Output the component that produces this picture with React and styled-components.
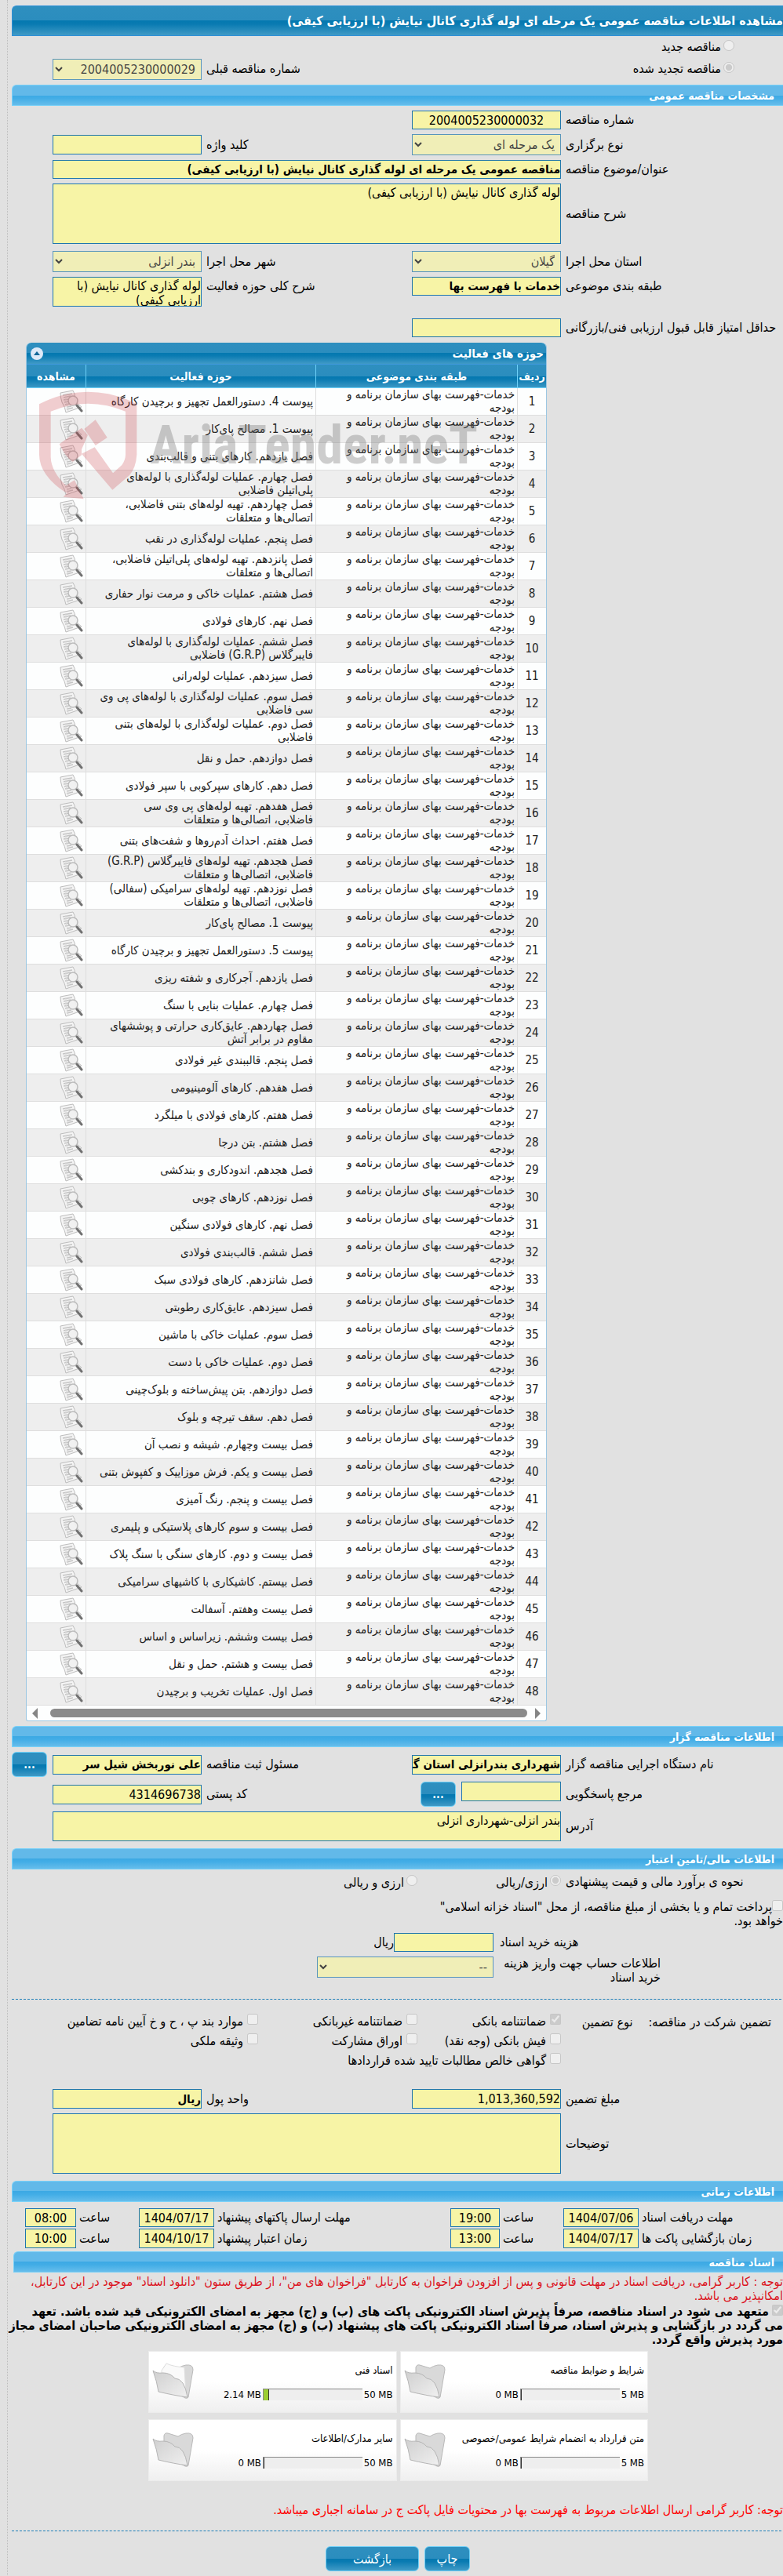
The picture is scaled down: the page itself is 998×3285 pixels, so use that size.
import React, { useId } from 'react';
import styled, { createGlobalStyle, css } from 'styled-components';

const Global = createGlobalStyle`
  *, *::before, *::after { box-sizing: border-box; }
  body {
    margin: 0;
    background: #e1e1e1;
    color: #000;
    overflow-x: hidden;
    font: 16px/18px "DejaVu Sans Condensed", "DejaVu Sans", sans-serif;
  }
`;

const blueGloss = css`
  background: linear-gradient(#2e8fbf 0, #2b8dbe 50%, #0478b0 50%, #0a7bb2 62%, #409ac6 100%);
`;

const Page = styled.main`
  margin-left: 9px;
  padding: 7px 0 5px 5px;
  border-left: 1px dotted #bdbdbd;
  direction: rtl;
`;

const Title = styled.h1`
  ${blueGloss}
  margin: 0;
  height: 39px;
  border: 1px solid #2f90d8;
  border-right: 0;
  border-radius: 6px 0 0 0;
  color: #fff;
  font-size: 16px;
  line-height: 38px;
  white-space: nowrap;
`;

const SectionBar = styled.h2`
  margin: ${p => p.$top ?? 6}px 0 0 ${p => p.$inset ?? 0}px;
  height: 27px;
  padding-right: 11px;
  background: linear-gradient(#62b9e9 0, #62b9e9 50%, #3ca9e4 50%, #42ade6 65%, #66bdeb 100%);
  border: 1px solid #78d0f8;
  border-right: 0;
  border-radius: 6px 0 0 0;
  color: #fff;
  font-size: 14px;
  line-height: 26px;
`;

const Row = styled.div`
  display: grid;
  grid-template-columns: 283fr 190fr 268fr 190fr 52fr;
  align-items: ${p => p.$align || 'center'};
  margin-top: ${p => p.$top ?? 6}px;
`;

const Caption = styled.label`
  padding-left: ${p => p.$gap ?? 6}px;
  text-align: left;
  line-height: 24px;
  white-space: nowrap;
`;

const box = css`
  display: block;
  width: 100%;
  margin: 0;
  padding: 0;
  background: #f7f4a6;
  border: 1px solid #1f76ad;
  border-radius: 0;
  color: #000;
  outline: 0;
`;

const Input = styled.input`
  ${box}
  height: ${p => p.$tall ? 25 : 24}px;
  font: ${p => p.$bold ? 'bold 15px' : '16px'} "DejaVu Sans Condensed", "DejaVu Sans", sans-serif;
  text-align: ${p => p.$center ? 'center' : 'right'};
`;

const TextArea = styled.textarea`
  ${box}
  height: ${p => p.$height}px;
  font: inherit;
  line-height: 18px;
  padding-top: 2px;
  resize: none;
  overflow: hidden;
`;

const Select = styled.select`
  ${box}
  height: 27px;
  padding: 0 3px;
  font: 16px "DejaVu Sans Condensed", "DejaVu Sans", sans-serif;
  opacity: .7;
`;

const Wide = styled.div`
  grid-column: 2 / span 3;
`;

const ModeRow = styled.div`
  display: grid;
  grid-template-columns: 741fr 190fr 52fr;
  align-items: center;
  height: 28px;
`;

const ModeCell = styled.div`
  display: flex;
  justify-content: space-between;
  padding-right: 62px;
`;

const Choice = styled.label`
  display: flex;
  align-items: center;
  white-space: nowrap;
  gap: ${p => p.$gap ?? 3}px;
`;

const Tick = styled.input`
  width: 14px;
  height: 14px;
  margin: 0 0 5px;
  flex: none;
`;

const Button = styled.button`
  ${blueGloss}
  height: 32px;
  width: ${p => p.$width}px;
  padding: 0;
  border: 1px solid #6dd0f8;
  border-radius: 6px;
  color: #fff;
  font: ${p => p.$bold ? 'bold 14px' : '16px'} "DejaVu Sans Condensed", "DejaVu Sans", sans-serif;
  cursor: pointer;
`;

const ButtonCell = styled.div`
  display: flex;
  justify-content: flex-end;
`;

const AskCell = styled.div`
  display: flex;
  justify-content: space-between;
  align-items: flex-start;
  gap: 7px;
  padding-left: 11px;
`;

/* Activity list */

const Panel = styled.section`
  position: relative;
  margin: 7px 301px 0 18px;
  border: 1px solid #9cc7e2;
  border-top: 0;
  border-radius: 6px 6px 3px 3px;
  background: #fdfefe;
`;

const PanelHead = styled.header`
  ${blueGloss}
  display: flex;
  justify-content: space-between;
  align-items: center;
  height: 28px;
  padding: 0 3px 0 5px;
  border-radius: 6px 6px 0 0;
  border-bottom: 1px solid #3f98da;
  color: #fff;
  font-size: 15px;
  font-weight: bold;
`;

const Toggle = styled.button`
  width: 16px;
  height: 16px;
  padding: 0;
  border: 0;
  border-radius: 8px;
  background: #dde9f8;
  display: grid;
  place-items: center;
`;

const Grid = styled.table`
  width: 100%;
  table-layout: fixed;
  border-collapse: separate;
  border-spacing: 0;
`;

const Th = styled.th`
  width: ${p => p.$width || 'auto'};
  height: 30px;
  padding: 0;
  border-bottom: 1px solid #6dd0f8;
  border-left: ${p => p.$last ? '0' : '1px solid #6dd0f8'};
  color: #fff;
  font-size: 14px;
`;

const HeadRow = styled.tr`
  ${blueGloss}
`;

const BodyRow = styled.tr`
  background: ${p => p.$odd ? '#eee' : '#fdfefe'};
`;

const Td = styled.td`
  height: 35px;
  padding: 0 3px;
  border-bottom: 1px solid #dedede;
  border-left: ${p => p.$last ? '0' : '1px solid #dedede'};
  color: #222;
  font-size: 15px;
  line-height: 17px;
  text-align: ${p => p.$center ? 'center' : 'right'};
  white-space: nowrap;
`;

const ViewLink = styled.a`
  display: block;
  width: 30px;
  height: 30px;
`;

const ScrollTrack = styled.div`
  display: flex;
  align-items: center;
  justify-content: space-between;
  gap: 10px;
  height: 19px;
  padding: 0 7px;
`;

const ScrollThumb = styled.div`
  flex: 1;
  height: 11px;
  margin-left: 6px;
  border-radius: 6px;
  background: #8b8b8b;
`;

const Watermark = styled.div`
  position: absolute;
  left: 16px;
  top: 61px;
  display: flex;
  align-items: flex-start;
  gap: 16px;
  direction: ltr;
  pointer-events: none;
`;

const WatermarkName = styled.span`
  color: rgba(120, 120, 120, .36);
  font: bold 68px/100px "Liberation Sans Narrow", "Roboto Condensed", "Liberation Sans", sans-serif;
  white-space: nowrap;
  padding-top: 20px;
`;

/* Financial part */

const MoneyRow = styled(Row)`
  grid-template-columns: 369fr 225fr 389fr;
`;

const CostCell = styled.div`
  display: grid;
  grid-template-columns: 127px auto;
  justify-content: start;
  align-items: center;
`;

const AccountCaption = styled.label`
  width: 213px;
  margin-right: auto;
  padding-left: 8px;
  line-height: 18px;
`;

const Treasury = styled.label`
  display: block;
  margin-top: 10px;
  line-height: 18px;
`;

const Divider = styled.hr`
  margin: ${p => p.$top}px 2px 0 0;
  border: 0;
  border-top: 1px dashed #1f7fb8;
`;

const Guarantee = styled.div`
  display: grid;
  grid-template-columns: 283fr 700fr;
  margin-top: ${p => p.$top}px;
`;

const GuaranteeLead = styled.div`
  display: flex;
  gap: 20px;
  padding-right: 15px;
  line-height: 28px;
  white-space: nowrap;
`;

const Options = styled.div`
  display: grid;
  grid-template-columns: minmax(0, 183fr) minmax(0, 203fr) minmax(0, 314fr);
  grid-auto-rows: 25px;
`;

const DateRow = styled.div`
  display: grid;
  grid-template-columns: 184fr 96fr 81fr 63fr 301fr 96fr 80fr 65fr 17fr;
  align-items: center;
  margin-top: ${p => p.$top}px;
`;

/* Documents */

const Notice = styled.p`
  margin: ${p => p.$top}px 0 0;
  color: ${p => p.$color};
  line-height: 18px;
  white-space: nowrap;
`;

const Pledge = styled.label`
  display: block;
  margin-top: 2px;
  font-weight: bold;
  line-height: 18px;
  white-space: nowrap;
`;

const InlineTick = styled.input`
  width: 14px;
  height: 14px;
  margin: 0 0 0 ${p => p.$gap ?? 0}px;
  vertical-align: 0;
`;

const Cards = styled.div`
  display: grid;
  grid-template-columns: 1fr 1fr;
  gap: 8px 4px;
  margin: 5px 172px 0 174px;
`;

const Card = styled.article`
  display: flex;
  justify-content: space-between;
  height: 79px;
  padding: 13px 4px 0 3px;
  background: linear-gradient(#fff 0, #fff 50%, #efefef 100%);
  border: 1px solid #ececec;
`;

const CardTitle = styled.h3`
  margin: 0 0 12px;
  font-size: 13px;
  font-weight: normal;
  line-height: 22px;
  white-space: nowrap;
`;

const Usage = styled.div`
  display: flex;
  align-items: center;
  gap: 2px;
  height: 15px;
  font-size: 13px;
`;

const Amount = styled.span`
  direction: ltr;
  white-space: nowrap;
`;

const Meter = styled.div`
  width: 127px;
  height: 15px;
  direction: ltr;
  background: #eee;
  border-top: 1px solid #8a8a8a;
  border-left: 1px solid #8a8a8a;
`;

const MeterFill = styled.div`
  height: 100%;
  background: #9acd32;
  border-right: 1px solid #333;
`;

const FolderBox = styled.div`
  width: 58px;
  flex: none;
  margin-top: 1px;
`;

const Actions = styled.div`
  display: flex;
  gap: 7px;
  margin: 19px 399px 0 0;
`;

function DocIcon() {
  return (
    <svg width="30" height="30" viewBox="0 0 30 30" aria-hidden="true">
      <path d="M1 4 L17 1 Q20 5 20 12 Q22 19 28 22 L8 29 Q7 22 3 16 Q1 10 1 4Z" fill="#f4f4f4" stroke="#bdbdbd" />
      <path d="M4 7l12-2M5 10l9-2M5 13l7-1M6 16l5-1M7 19l5-1M9 22l6-1M9 25l8-2" stroke="#c4c4c4" strokeWidth="1.5" />
      <path d="M8 5v9l3 13" stroke="#dadada" fill="none" />
      <circle cx="17" cy="14" r="6" fill="#f1f1f1" fillOpacity=".9" stroke="#bcbcbc" strokeWidth="1.5" />
      <path d="M22 20l6 7" stroke="#707070" strokeWidth="3" strokeLinecap="round" />
    </svg>
  );
}

function Folder({ full }) {
  const id = useId();
  return (
    <svg width="58" height="50" viewBox="0 0 58 50" aria-hidden="true">
      <defs>
        <linearGradient id={id} x1="0" y1="0" x2="1" y2="1">
          <stop offset="0" stopColor="#cfcfcf" />
          <stop offset="1" stopColor="#f0f0f0" />
        </linearGradient>
      </defs>
      <path d="M16 6 Q17 2 21 3 L34 7 Q38 4 44 3 Q53 2 53 9 L47 44 Q46 46 43 45 L16 30Z" fill="#d9d9d9" stroke="#b9b9b9" />
      {full && <path d="M13 10 L19 1 Q28 5 42 6 L44 40 L14 26Z" fill="#fafafa" stroke="#dedede" />}
      <path d="M2 10 Q6 14 15 13 Q24 13 30 20 Q42 20 46 44 Q30 42 9 37 Q7 24 2 10Z" fill={`url(#${id})`} stroke="#b5b5b5" />
    </svg>
  );
}

function Shield() {
  return (
    <svg width="125" height="139" viewBox="60 205 375 417" fill="#c8323c" fillOpacity=".24" aria-hidden="true">
      <path d="M60 257 Q150 210 246 210 Q345 210 433 257 V450 Q430 500 405 529 L340 585 L222 447 L272 422 L342 521 L376 490 Q390 470 390 450 V285 Q320 255 246 255 Q175 255 104 285 V460 Q106 515 162 568 L195 548 L230 620 L152 612 L165 598 Q60 530 60 450Z" />
      <path d="M137 410 L222 348 L246 375 L222 430 L222 452 L188 478 Q160 460 137 410Z" />
      <path d="M232 352 L275 317 L320 385 L275 415Z" />
    </svg>
  );
}

const ACTIVITIES = [
  'پیوست 4. دستورالعمل تجهیز و برچیدن کارگاه',
  'پیوست 1. مصالح پای‌کار',
  'فصل یازدهم. کارهای بتنی و قالب‌بندی',
  'فصل چهارم. عملیات لوله‌گذاری با لوله‌های|پلی‌اتیلن فاضلابی',
  'فصل چهاردهم. تهیه لوله‌های بتنی فاضلابی،|اتصالی‌ها و متعلقات',
  'فصل پنجم. عملیات لوله‌گذاری در نقب',
  'فصل پانزدهم. تهیه لوله‌های پلی‌اتیلن فاضلابی،|اتصالی‌ها و متعلقات',
  'فصل هشتم. عملیات خاکی و مرمت نوار حفاری',
  'فصل نهم. کارهای فولادی',
  'فصل ششم. عملیات لوله‌گذاری با لوله‌های|فایبرگلاس (G.R.P) فاضلابی',
  'فصل سیزدهم. عملیات لوله‌رانی',
  'فصل سوم. عملیات لوله‌گذاری با لوله‌های پی وی|سی فاضلابی',
  'فصل دوم. عملیات لوله‌گذاری با لوله‌های بتنی|فاضلابی',
  'فصل دوازدهم. حمل و نقل',
  'فصل دهم. کارهای سپرکوبی با سپر فولادی',
  'فصل هفدهم. تهیه لوله‌های پی وی سی|فاضلابی، اتصالی‌ها و متعلقات',
  'فصل هفتم. احداث آدم‌روها و شفت‌های بتنی',
  'فصل هجدهم. تهیه لوله‌های فایبرگلاس (G.R.P)|فاضلابی، اتصالی‌ها و متعلقات',
  'فصل نوزدهم. تهیه لوله‌های سرامیکی (سفالی)|فاضلابی، اتصالی‌ها و متعلقات',
  'پیوست 1. مصالح پای‌کار',
  'پیوست 5. دستورالعمل تجهیز و برچیدن کارگاه',
  'فصل یازدهم. آجرکاری و شفته ریزی',
  'فصل چهارم. عملیات بنایی با سنگ',
  'فصل چهاردهم. عایق‌کاری حرارتی و پوششهای|مقاوم در برابر آتش',
  'فصل پنجم. قالببندی غیر فولادی',
  'فصل هفدهم. کارهای آلومینیومی',
  'فصل هفتم. کارهای فولادی با میلگرد',
  'فصل هشتم. بتن درجا',
  'فصل هجدهم. اندودکاری و بندکشی',
  'فصل نوزدهم. کارهای چوبی',
  'فصل نهم. کارهای فولادی سنگین',
  'فصل ششم. قالب‌بندی فولادی',
  'فصل شانزدهم. کارهای فولادی سبک',
  'فصل سیزدهم. عایق‌کاری رطوبتی',
  'فصل سوم. عملیات خاکی با ماشین',
  'فصل دوم. عملیات خاکی با دست',
  'فصل دوازدهم. بتن پیش‌ساخته و بلوک‌چینی',
  'فصل دهم. سقف تیرچه و بلوک',
  'فصل بیست وچهارم. شیشه و نصب آن',
  'فصل بیست و یکم. فرش موزاییک و کفپوش بتنی',
  'فصل بیست و پنجم. رنگ آمیزی',
  'فصل بیست و سوم کارهای پلاستیکی و پلیمری',
  'فصل بیست و دوم. کارهای سنگی با سنگ پلاک',
  'فصل بیستم. کاشیکاری با کاشیهای سرامیکی',
  'فصل بیست وهفتم. آسفالت',
  'فصل بیست وششم. زیراساس و اساس',
  'فصل بیست و هشتم. حمل و نقل',
  'فصل اول. عملیات تخریب و برچیدن',
];

function Lines({ text }) {
  return text.split('|').map((line, i) => (
    <React.Fragment key={i}>{i > 0 && <br />}{line}</React.Fragment>
  ));
}

const GUARANTEES = [
  ['ضمانتنامه بانکی', true],
  ['ضمانتنامه غیربانکی'],
  ['موارد بند پ ، ح و خ آیین نامه تضامین'],
  ['فیش بانکی (وجه نقد)'],
  ['اوراق مشارکت'],
  ['وثیقه ملکی'],
  ['گواهی خالص مطالبات تایید شده قراردادها'],
];

const DATES = [
  ['مهلت دریافت اسناد', '1404/07/06', '19:00', 'مهلت ارسال پاکتهای پیشنهاد', '1404/07/17', '08:00'],
  ['زمان بازگشایی پاکت ها', '1404/07/17', '13:00', 'زمان اعتبار پیشنهاد', '1404/10/17', '10:00'],
];

const DOCUMENTS = [
  ['شرایط و ضوابط مناقصه', 5, 0],
  ['اسناد فنی', 50, 2.14],
  ['متن قرارداد به انضمام شرایط عمومی/خصوصی', 5, 0],
  ['سایر مدارک/اطلاعات', 50, 0],
];

function ActivityPanel() {
  return (
    <Panel>
      <PanelHead>
        <span>حوزه های فعالیت</span>
        <Toggle aria-label="بستن">
          <svg width="8" height="5" viewBox="0 0 8 5"><path d="M0 5L4 0l4 5z" fill="#14689a" /></svg>
        </Toggle>
      </PanelHead>
      <Grid>
        <thead>
          <HeadRow>
            <Th $width="37px">ردیف</Th>
            <Th $width="257px">طبقه بندی موضوعی</Th>
            <Th>حوزه فعالیت</Th>
            <Th $width="75px" $last>مشاهده</Th>
          </HeadRow>
        </thead>
        <tbody>
          {ACTIVITIES.map((text, i) => (
            <BodyRow key={i} $odd={i % 2 === 1}>
              <Td $center>{i + 1}</Td>
              <Td>خدمات-فهرست بهای سازمان برنامه و<br />بودجه</Td>
              <Td><Lines text={text} /></Td>
              <Td $last><ViewLink href="#" aria-label="مشاهده"><DocIcon /></ViewLink></Td>
            </BodyRow>
          ))}
        </tbody>
      </Grid>
      <ScrollTrack>
        <svg width="7" height="14" viewBox="0 0 7 14"><path d="M0 0l7 7L0 14z" fill="#858585" /></svg>
        <ScrollThumb />
        <svg width="7" height="14" viewBox="0 0 7 14"><path d="M7 0L0 7l7 7z" fill="#858585" /></svg>
      </ScrollTrack>
      <Watermark>
        <Shield />
        <WatermarkName>AriaTender.neT</WatermarkName>
      </Watermark>
    </Panel>
  );
}

export default function App() {
  return (
    <>
      <Global />
      <Page>
        <Title>مشاهده اطلاعات مناقصه عمومی یک مرحله ای لوله گذاری کانال نیایش (با ارزیابی کیفی)</Title>
        <ModeRow>
          <ModeCell>
            <Choice><Tick type="radio" name="mode" disabled />مناقصه جدید</Choice>
          </ModeCell>
        </ModeRow>
        <ModeRow>
          <ModeCell>
            <Choice><Tick type="radio" name="mode" disabled defaultChecked />مناقصه تجدید شده</Choice>
            <Caption htmlFor="prev">شماره مناقصه قبلی</Caption>
          </ModeCell>
          <Select id="prev" disabled><option>2004005230000029</option></Select>
        </ModeRow>

        <SectionBar>مشخصات مناقصه عمومی</SectionBar>
        <Row>
          <Caption htmlFor="number">شماره مناقصه</Caption>
          <Input id="number" $center readOnly value="2004005230000032" />
        </Row>
        <Row>
          <Caption htmlFor="kind">نوع برگزاری</Caption>
          <Select id="kind" disabled><option>یک مرحله ای</option></Select>
          <Caption htmlFor="keyword">کلید واژه</Caption>
          <Input id="keyword" $tall readOnly value="" />
        </Row>
        <Row>
          <Caption htmlFor="subject">عنوان/موضوع مناقصه</Caption>
          <Wide><Input id="subject" $bold readOnly value="مناقصه عمومی یک مرحله ای لوله گذاری کانال نیایش (با ارزیابی کیفی)" /></Wide>
        </Row>
        <Row>
          <Caption htmlFor="desc">شرح مناقصه</Caption>
          <Wide><TextArea id="desc" $height={77} readOnly value="لوله گذاری کانال نیایش (با ارزیابی کیفی)" /></Wide>
        </Row>
        <Row $top={9}>
          <Caption htmlFor="province">استان محل اجرا</Caption>
          <Select id="province" disabled><option>گیلان</option></Select>
          <Caption htmlFor="city">شهر محل اجرا</Caption>
          <Select id="city" disabled><option>بندر انزلی</option></Select>
        </Row>
        <Row $align="start">
          <Caption htmlFor="category">طبقه بندی موضوعی</Caption>
          <Input id="category" $bold readOnly value="خدمات با فهرست بها" />
          <Caption htmlFor="scope">شرح کلی حوزه فعالیت</Caption>
          <TextArea id="scope" $height={38} readOnly value={'لوله گذاری کانال نیایش (با ارزیابی کیفی)'} />
        </Row>
        <Row $top={15}>
          <Caption htmlFor="score">حداقل امتیاز قابل قبول ارزیابی فنی/بازرگانی</Caption>
          <Input id="score" readOnly value="" />
        </Row>

        <ActivityPanel />

        <SectionBar>اطلاعات مناقصه گزار</SectionBar>
        <Row>
          <Caption htmlFor="agency">نام دستگاه اجرایی مناقصه گزار</Caption>
          <Input id="agency" $tall $bold readOnly value="شهرداری بندرانزلی استان گیلان" />
          <Caption htmlFor="officer">مسئول ثبت مناقصه</Caption>
          <Input id="officer" $tall $bold readOnly value="علی نوربخش شیل سر" />
          <ButtonCell><Button $width={45} $bold>...</Button></ButtonCell>
        </Row>
        <Row>
          <Caption htmlFor="answer">مرجع پاسخگویی</Caption>
          <AskCell>
            <Input id="answer" $tall readOnly value="" />
            <div><Button $width={45} $bold>...</Button></div>
          </AskCell>
          <Caption htmlFor="postal">کد پستی</Caption>
          <Input id="postal" $tall readOnly value="4314696738" />
        </Row>
        <Row>
          <Caption htmlFor="address">آدرس</Caption>
          <Wide><TextArea id="address" $height={38} readOnly value="بندر انزلی-شهرداری انزلی" /></Wide>
        </Row>

        <SectionBar $top={9}>اطلاعات مالی/تامین اعتبار</SectionBar>
        <Guarantee $top={4}>
          <Caption as="span">نحوه ی برآورد مالی و قیمت پیشنهادی</Caption>
          <Options>
            <Choice><Tick type="radio" name="money" disabled defaultChecked />ارزی/ریالی</Choice>
            <Choice><Tick type="radio" name="money" disabled />ارزی و ریالی</Choice>
          </Options>
        </Guarantee>
        <Treasury>
          <InlineTick type="checkbox" disabled />
          پرداخت تمام و یا بخشی از مبلغ مناقصه، از محل "اسناد خزانه اسلامی"<br />خواهد بود.
        </Treasury>
        <MoneyRow>
          <Caption htmlFor="cost" $gap={8}>هزینه خرید اسناد</Caption>
          <CostCell><Input id="cost" readOnly value="" /><span>ریال</span></CostCell>
        </MoneyRow>
        <MoneyRow $align="start">
          <AccountCaption htmlFor="account">اطلاعات حساب جهت واریز هزینه خرید اسناد</AccountCaption>
          <Select id="account" disabled><option>--</option></Select>
        </MoneyRow>

        <Divider $top={18} />
        <Guarantee $top={15}>
          <GuaranteeLead>
            <span>تضمین شرکت در مناقصه:</span>
            <span>نوع تضمین</span>
          </GuaranteeLead>
          <Options>
            {GUARANTEES.map(([name, on]) => (
              <Choice key={name} $gap={5}><Tick type="checkbox" disabled defaultChecked={on} />{name}</Choice>
            ))}
          </Options>
        </Guarantee>
        <Row $top={24}>
          <Caption htmlFor="amount">مبلغ تضمین</Caption>
          <Input id="amount" $tall readOnly value="1,013,360,592" />
          <Caption htmlFor="unit">واحد پول</Caption>
          <Input id="unit" $tall $bold readOnly value="ریال" />
        </Row>
        <Row>
          <Caption htmlFor="notes">توضیحات</Caption>
          <Wide><TextArea id="notes" $height={77} readOnly value="" /></Wide>
        </Row>

        <SectionBar $top={9}>اطلاعات زمانی</SectionBar>
        {DATES.map(([a, d1, t1, b, d2, t2], i) => (
          <DateRow key={a} $top={i ? 2 : 8}>
            <Caption $gap={4} htmlFor={`d1${i}`}>{a}</Caption>
            <Input id={`d1${i}`} $center $tall={i} readOnly value={d1} />
            <Caption $gap={4} htmlFor={`t1${i}`}>ساعت</Caption>
            <Input id={`t1${i}`} $center $tall={i} readOnly value={t1} />
            <Caption $gap={4} htmlFor={`d2${i}`}>{b}</Caption>
            <Input id={`d2${i}`} $center $tall={i} readOnly value={d2} />
            <Caption $gap={4} htmlFor={`t2${i}`}>ساعت</Caption>
            <Input id={`t2${i}`} $center $tall={i} readOnly value={t2} />
          </DateRow>
        ))}

        <SectionBar $top={4} $inset={2}>اسناد مناقصه</SectionBar>
        <Notice $top={3} $color="#dc141e">
          توجه : کاربر گرامی، دریافت اسناد در مهلت قانونی و پس از افزودن فراخوان به کارتابل "فراخوان های من"، از طریق ستون "دانلود اسناد" موجود در این کارتابل،<br />امکانپذیر می باشد.
        </Notice>
        <Pledge>
          <InlineTick type="checkbox" disabled defaultChecked $gap={4} />
          متعهد می شود در اسناد مناقصه، صرفاً پذیرش اسناد الکترونیکی پاکت های (ب) و (ج) مجهز به امضای الکترونیکی قید شده باشد. تعهد<br />
          می گردد در بازگشایی و پذیرش اسناد، صرفاً اسناد الکترونیکی پاکت های پیشنهاد (ب) و (ج) مجهز به امضای الکترونیکی صاحبان امضای مجاز<br />
          مورد پذیرش واقع گردد.
        </Pledge>
        <Cards>
          {DOCUMENTS.map(([name, max, used]) => (
            <Card key={name}>
              <div>
                <CardTitle>{name}</CardTitle>
                <Usage>
                  <Amount>{max} MB</Amount>
                  <Meter><MeterFill style={{ width: used ? `${Math.round(used / max * 100) + 2}%` : '1px' }} /></Meter>
                  <Amount>{used} MB</Amount>
                </Usage>
              </div>
              <FolderBox><Folder full={used > 0} /></FolderBox>
            </Card>
          ))}
        </Cards>
        <Notice $top={28} $color="#ff0000">
          توجه: کاربر گرامی ارسال اطلاعات مربوط به فهرست بها در محتویات فایل پاکت ج در سامانه اجباری میباشد.
        </Notice>
        <Divider $top={17} />
        <Actions>
          <Button $width={58}>چاپ</Button>
          <Button $width={119}>بازگشت</Button>
        </Actions>
      </Page>
    </>
  );
}
